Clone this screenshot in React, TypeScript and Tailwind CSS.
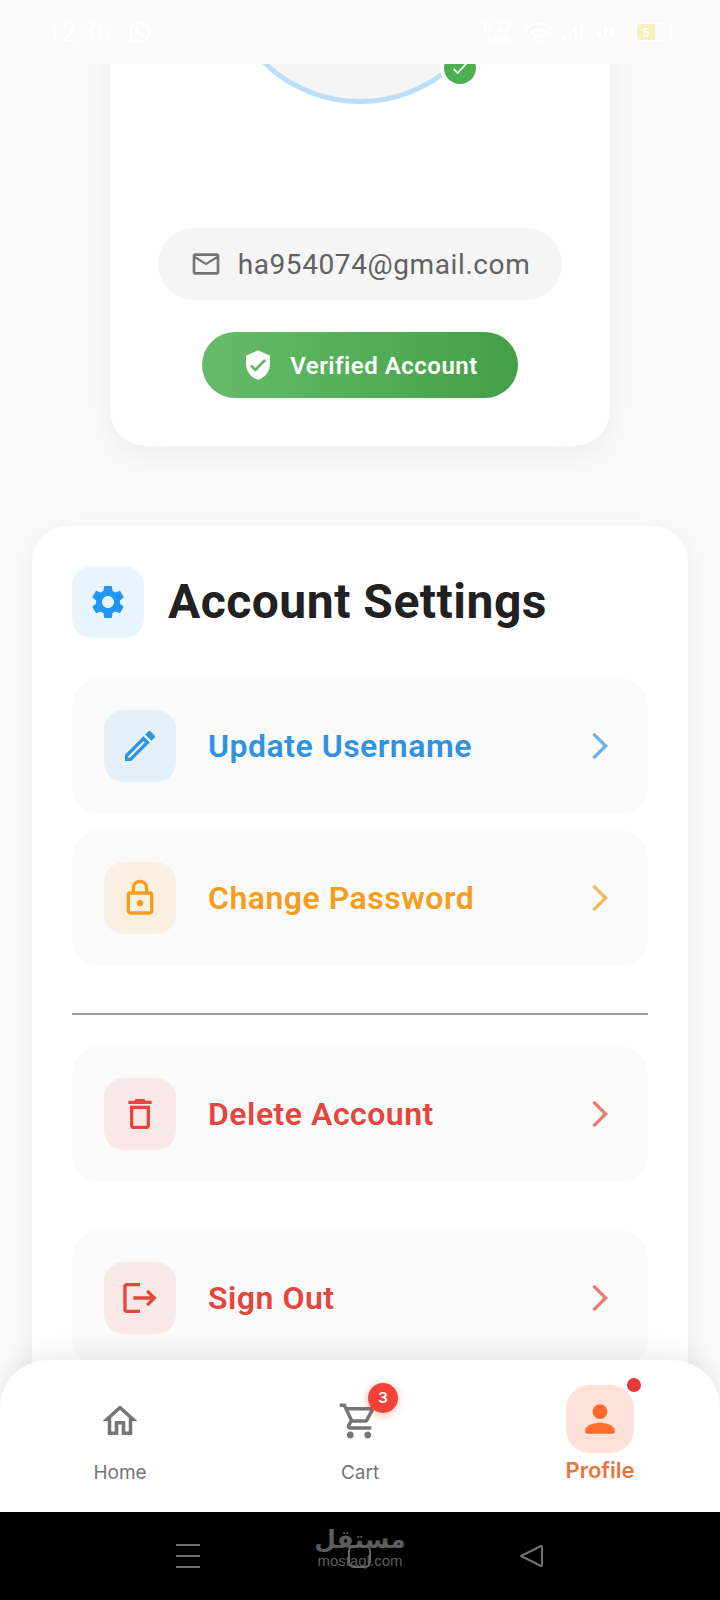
import { FaWhatsapp } from 'react-icons/fa';
import { Wifi } from 'lucide-react';

const PATHS = {
  gear: 'M19.14 12.94c.04-.3.06-.61.06-.94 0-.32-.02-.64-.07-.94l2.03-1.58c.18-.14.23-.41.12-.61l-1.92-3.32c-.12-.22-.37-.29-.59-.22l-2.39.96c-.5-.38-1.03-.7-1.62-.94l-.36-2.54c-.04-.24-.24-.41-.48-.41h-3.84c-.24 0-.43.17-.47.41l-.36 2.54c-.59.24-1.13.57-1.62.94l-2.39-.96c-.22-.08-.47 0-.59.22L2.74 8.87c-.12.21-.08.47.12.61l2.03 1.58c-.05.3-.09.63-.09.94s.02.64.07.94l-2.03 1.58c-.18.14-.23.41-.12.61l1.92 3.32c.12.22.37.29.59.22l2.39-.96c.5.38 1.03.7 1.62.94l.36 2.54c.05.24.24.41.48.41h3.84c.24 0 .44-.17.47-.41l.36-2.54c.59-.24 1.13-.56 1.62-.94l2.39.96c.22.08.47 0 .59-.22l1.92-3.32c.12-.22.07-.47-.12-.61l-2.01-1.58zM12 15.6c-1.98 0-3.6-1.62-3.6-3.6s1.62-3.6 3.6-3.6 3.6 1.62 3.6 3.6-1.62 3.6-3.6 3.6z',
  edit: 'M14.06 9.02l.92.92L5.92 19H5v-.92l9.06-9.06M17.66 3c-.25 0-.51.1-.7.29l-1.83 1.83 3.75 3.75 1.83-1.83c.39-.39.39-1.02 0-1.41l-2.34-2.34c-.2-.2-.45-.29-.71-.29zm-3.6 3.19L3 17.25V21h3.75L17.81 9.94l-3.75-3.75z',
  lock: 'M18 8h-1V6c0-2.76-2.24-5-5-5S7 3.24 7 6v2H6c-1.1 0-2 .9-2 2v10c0 1.1.9 2 2 2h12c1.1 0 2-.9 2-2V10c0-1.1-.9-2-2-2zM9 6c0-1.66 1.34-3 3-3s3 1.34 3 3v2H9V6zm9 14H6V10h12v10zm-6-3c1.1 0 2-.9 2-2s-.9-2-2-2-2 .9-2 2 .9 2 2 2z',
  trash: 'M16 9v10H8V9h8m-1.5-6h-5l-1 1H5v2h14V4h-3.5l-1-1zM18 7H6v12c0 1.1.9 2 2 2h8c1.1 0 2-.9 2-2V7z',
  logout: 'M17 7l-1.41 1.41L18.17 11H8v2h10.17l-2.58 2.58L17 17l5-5zM4 5h8V3H4c-1.1 0-2 .9-2 2v14c0 1.1.9 2 2 2h8v-2H4V5z',
  chevron: 'M6.23 20.23L8 22l10-10L8 2 6.23 3.77 14.46 12z',
  mail: 'M20 4H4c-1.1 0-1.99.9-1.99 2L2 18c0 1.1.9 2 2 2h16c1.1 0 2-.9 2-2V6c0-1.1-.9-2-2-2zm0 14H4V8l8 5 8-5v10zm-8-7L4 6h16l-8 5z',
  shield: 'M12 1L3 5v6c0 5.55 3.84 10.74 9 12 5.16-1.26 9-6.45 9-12V5l-9-4zm-2 16l-4-4 1.41-1.41L10 14.17l6.59-6.59L18 9l-8 8z',
  home: 'M12 5.69l5 4.5V18h-2v-6H9v6H7v-7.81l5-4.5M12 3L2 12h3v8h6v-6h2v6h6v-8h3L12 3z',
  cart: 'M15.55 13c.75 0 1.41-.41 1.75-1.03l3.58-6.49c.37-.66-.11-1.48-.87-1.48H5.21l-.94-2H1v2h2l3.6 7.59-1.35 2.44C4.52 15.37 5.48 17 7 17h12v-2H7l1.1-2h7.45zM6.16 6h12.15l-2.76 5H8.53L6.16 6zM7 18c-1.1 0-1.99.9-1.99 2S5.9 22 7 22s2-.9 2-2-.9-2-2-2zm10 0c-1.1 0-1.99.9-1.99 2s.89 2 1.99 2 2-.9 2-2-.9-2-2-2z',
  person: 'M12 12c2.21 0 4-1.79 4-4s-1.79-4-4-4-4 1.79-4 4 1.79 4 4 4zm0 2c-2.67 0-8 1.34-8 4v1c0 .55.45 1 1 1h14c.55 0 1-.45 1-1v-1c0-2.66-5.33-4-8-4z',
};

function Icon({ name, className }: { name: keyof typeof PATHS; className: string }) {
  return (
    <svg viewBox="0 0 24 24" fill="currentColor" className={className}>
      <path d={PATHS[name]} />
    </svg>
  );
}

function SettingRow({
  icon,
  label,
  box,
  color,
  className = '',
}: {
  icon: keyof typeof PATHS;
  label: string;
  box: string;
  color: string;
  className?: string;
}) {
  return (
    <div className={`flex h-[136px] items-center rounded-[28px] bg-[#fafafa] pl-8 pr-8 ${className}`}>
      <div className={`flex h-[72px] w-[72px] items-center justify-center rounded-[20px] ${box} ${color}`}>
        <Icon name={icon} className="h-10 w-10" />
      </div>
      <span className={`ml-8 flex-1 text-[32px] font-semibold tracking-[0.5px] ${color}`}>{label}</span>
      <Icon name="chevron" className={`h-8 w-8 opacity-70 ${color}`} />
    </div>
  );
}

function StatusBar() {
  return (
    <div className="absolute left-0 right-0 top-0 z-20 flex h-16 items-center bg-[#fafafa] pl-12 pr-12 text-white">
      <span className="text-[25px] font-light leading-none tracking-[0.3px]">12:36</span>
      <FaWhatsapp className="ml-[18px] h-6 w-6" />
      <div className="ml-auto flex flex-col items-center font-semibold leading-none">
        <span className="text-[15px]">0.27</span>
        <span className="text-[10px]">KB/S</span>
      </div>
      <Wifi className="ml-3 h-7 w-7" strokeWidth={2.5} />
      <div className="ml-[9px] flex items-end gap-[3px]">
        <div className="h-1 w-[3px] bg-white" />
        <div className="h-2 w-[3px] bg-white" />
        <div className="h-3 w-[3px] bg-white" />
        <div className="h-4 w-[3px] bg-white" />
      </div>
      <div className="ml-[15px] flex items-end gap-[3px]">
        <div className="h-1 w-[3px] bg-white" />
        <div className="h-2 w-[3px] bg-white" />
        <div className="h-2 w-[3px] bg-white" />
      </div>
      <div className="ml-[23px] flex h-[18px] w-[36px] overflow-hidden rounded-[5px] border border-white">
        <div className="flex w-[18px] items-center justify-center bg-[#fbeebf] text-[13px] font-bold leading-none text-white">5</div>
      </div>
    </div>
  );
}

function BottomNav() {
  return (
    <div className="absolute bottom-0 left-0 right-0 z-10">
      <div className="grid h-[152px] grid-cols-3 rounded-t-[48px] bg-white text-[#757575] shadow-[0_-6px_24px_rgba(0,0,0,0.08)] [font-family:Inter,sans-serif]">
        <div className="flex flex-col items-center pt-10">
          <Icon name="home" className="h-[42px] w-[42px]" />
          <span className="mt-5 text-[19px] leading-[22px]">Home</span>
        </div>
        <div className="flex flex-col items-center pt-10">
          <div className="relative -ml-[2px] h-[42px] w-[42px]">
            <Icon name="cart" className="h-[42px] w-[42px]" />
            <div className="absolute left-[30px] top-[-17px] flex h-[30px] w-[30px] items-center justify-center rounded-full bg-[#f44336] text-[15px] font-semibold text-white shadow-[0_2px_8px_rgba(244,67,54,0.4)]">
              3
            </div>
          </div>
          <span className="mt-5 text-[19px] leading-[22px]">Cart</span>
        </div>
        <div className="flex flex-col items-center pt-[25px] text-[#e8743f]">
          <div className="relative flex h-[68px] w-[68px] items-center justify-center rounded-[24px] bg-[#fee2d9]">
            <Icon name="person" className="h-11 w-11 text-[#ff6b2c]" />
            <div className="absolute right-[-7px] top-[-7px] h-[14px] w-[14px] rounded-full bg-[#e53935]" />
          </div>
          <span className="mt-[2px] text-[22px] font-semibold leading-[30px]">Profile</span>
        </div>
      </div>
      <div className="relative flex h-[88px] items-start justify-center bg-black">
        <div className="absolute left-[176px] top-[32px] flex w-6 flex-col gap-[9px]">
          <div className="h-[2px] bg-[#707070]" />
          <div className="h-[2px] bg-[#707070]" />
          <div className="h-[2px] bg-[#707070]" />
        </div>
        <div className="flex flex-col items-center pt-[14px] text-[#5c5c5c] [font-family:'Liberation_Sans',sans-serif]">
          <div dir="rtl" className="h-[28px] overflow-hidden text-[25px] font-bold leading-[28px] [font-family:'DejaVu_Sans',sans-serif]">مستقل</div>
          <div className="text-[15px] leading-[14px]">mostaql.com</div>
        </div>
        <div className="absolute left-[348px] top-[33px] h-[23px] w-[23px] rounded-[6px] border-2 border-[#666]" />
        <svg viewBox="0 0 24 24" fill="none" stroke="#707070" strokeWidth="2" className="absolute left-[519px] top-[32px] h-6 w-6">
          <path d="M2 12 L22 2 Q23 2 23 3 V21 Q23 22 22 22 Z" strokeLinejoin="round" />
        </svg>
      </div>
    </div>
  );
}

export default function App() {
  return (
    <div className="relative h-[1600px] w-[720px] overflow-hidden bg-[#fafafa] [font-family:Roboto,sans-serif]">
      <StatusBar />

      <div className="-mt-[216px]">
        {/* Profile card */}
        <div className="ml-[110px] flex w-[500px] flex-col items-center rounded-b-[36px] bg-white pb-12 pt-10 shadow-[0_8px_30px_rgba(0,0,0,0.06)]">
          <div className="relative h-[280px] w-[280px] rounded-full border-[5px] border-[#bbdefb] bg-[#f5f5f5]">
            <div className="absolute left-[215px] top-[219px] flex h-10 w-10 items-center justify-center rounded-full border-4 border-white bg-[#4caf50]">
              <svg viewBox="0 0 24 24" fill="none" stroke="white" strokeWidth="2" className="h-[22px] w-[22px]">
                <path d="M5 13l4.5 4.5L19 7" />
              </svg>
            </div>
          </div>
          <div className="mt-[124px] flex h-[72px] items-center gap-4 rounded-full bg-[#f5f5f5] px-8 text-[#616161]">
            <Icon name="mail" className="h-8 w-8 text-[#757575]" />
            <span className="pt-[2px] text-[28px] tracking-[0.6px]">ha954074@gmail.com</span>
          </div>
          <div className="mt-8 flex h-[66px] items-center gap-4 rounded-full bg-gradient-to-r from-[#66bb6a] to-[#43a047] px-10 text-white">
            <Icon name="shield" className="h-8 w-8" />
            <span className="pt-[2px] text-[24px] font-semibold tracking-[0.5px]">Verified Account</span>
          </div>
        </div>

        {/* Account settings */}
        <div className="ml-8 mt-20 w-[656px] rounded-[36px] bg-white p-10 shadow-[0_8px_30px_rgba(0,0,0,0.06)]">
          <div className="flex items-center gap-6">
            <div className="flex h-[72px] w-[72px] items-center justify-center rounded-[20px] bg-[#e8f4fd] text-[#2196f3]">
              <Icon name="gear" className="h-10 w-10" />
            </div>
            <h1 className="text-[48px] font-bold leading-none tracking-[0.5px] text-[#212121]">Account Settings</h1>
          </div>
          <SettingRow className="mt-10" icon="edit" label="Update Username" box="bg-[#e3f0fa]" color="text-[#2f93e0]" />
          <SettingRow className="mt-4" icon="lock" label="Change Password" box="bg-[#faf0e2]" color="text-[#f69d1c]" />
          <div className="mb-[31px] mt-[47px] h-[2px] bg-[#9e9e9e]" />
          <SettingRow icon="trash" label="Delete Account" box="bg-[#fae8e6]" color="text-[#e2463c]" />
          <SettingRow className="mt-12" icon="logout" label="Sign Out" box="bg-[#fae8e6]" color="text-[#e2463c]" />
        </div>
      </div>

      <BottomNav />
    </div>
  );
}
